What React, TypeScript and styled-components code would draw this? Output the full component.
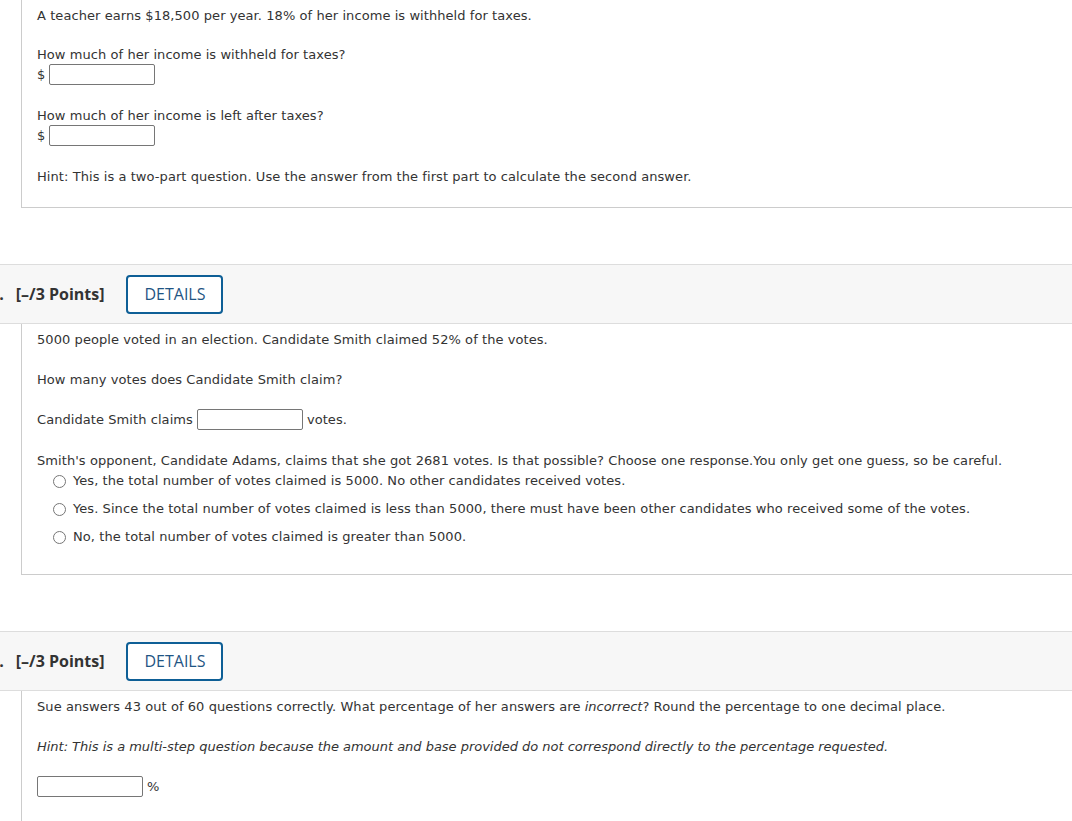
import React from 'react';
import styled, { createGlobalStyle } from 'styled-components';

const GlobalStyle = createGlobalStyle`
  html, body {
    margin: 0;
    padding: 0;
    background: #ffffff;
    overflow: hidden;
  }
  body {
    font-family: "DejaVu Sans", Verdana, sans-serif;
    font-size: 13px;
    letter-spacing: 0.07px;
    color: #333333;
  }
`;

const Page = styled.div`
  width: 1072px;
  display: flex;
  flex-direction: column;
`;

const Panel = styled.div<{ $bottom: number }>`
  margin-left: 21px;
  border-left: 1px solid #cccccc;
  border-bottom: 1px solid #cccccc;
  padding: 7px 0 ${p => p.$bottom}px 15px;
  display: flex;
  flex-direction: column;
`;

// text sits 1px lower than the box it occupies, like the original font
const Line = styled.p<{ $gap?: number }>`
  margin: ${p => p.$gap ?? 0}px 0 -1px 0;
  padding-top: 1px;
  line-height: 16px;
  white-space: nowrap;
`;

const Italic = styled.em`
  letter-spacing: -0.02px;
`;

const InputRow = styled.div<{ $gap?: number }>`
  display: flex;
  align-items: center;
  gap: 4px;
  margin-top: ${p => p.$gap ?? 2}px;
  height: 21px;
  line-height: 16px;
`;

const Answer = styled.input.attrs({ type: 'text' })`
  box-sizing: border-box;
  width: 106px;
  height: 21px;
  margin: 0;
  padding: 0 4px;
  border: 1px solid #767676;
  border-radius: 2px;
  background: #ffffff;
  font: inherit;
`;

const Header = styled.div`
  margin-top: 56px;
  height: 58px;
  display: flex;
  align-items: center;
  background: #f7f7f7;
  border-top: 1px solid #dddddd;
  border-bottom: 1px solid #dddddd;
  font-family: "Open Sans", "DejaVu Sans", sans-serif;
  font-size: 16px;
  letter-spacing: 0;
  color: #333333;
`;

const Num = styled.span`
  font-weight: 700;
  margin-left: -10px;
  margin-right: 12px;
`;

const Points = styled.span`
  font-weight: 700;
`;

const DetailsButton = styled.button`
  box-sizing: border-box;
  margin-left: 22px;
  width: 97px;
  height: 39px;
  border: 2px solid #0e5f96;
  border-radius: 4px;
  background: #ffffff;
  color: #1f5584;
  font-family: "Open Sans", "DejaVu Sans", sans-serif;
  font-size: 16px;
  padding: 0;
  cursor: pointer;
`;

const Choices = styled.div`
  display: flex;
  flex-direction: column;
  gap: 12px;
  margin-top: 5px;
  padding-left: 16px;
`;

const Choice = styled.label`
  display: flex;
  align-items: center;
  gap: 7px;
  height: 16px;
  line-height: 16px;
  white-space: nowrap;
  cursor: pointer;
`;

const Radio = styled.input.attrs({ type: 'radio' })`
  margin: 0;
  width: 13px;
  height: 13px;
`;

const App: React.FC = () => {
  return (
    <>
      <GlobalStyle />
      <Page>
        <Panel $bottom={23}>
          <Line>A teacher earns $18,500 per year. 18% of her income is withheld for taxes.</Line>
          <Line $gap={23}>How much of her income is withheld for taxes?</Line>
          <InputRow>
            <span>$</span>
            <Answer />
          </InputRow>
          <Line $gap={22}>How much of her income is left after taxes?</Line>
          <InputRow>
            <span>$</span>
            <Answer />
          </InputRow>
          <Line $gap={22}>
            Hint: This is a two-part question. Use the answer from the first part to calculate the second answer.
          </Line>
        </Panel>

        <Header>
          <Num>5.</Num>
          <Points>[–/3 Points]</Points>
          <DetailsButton>DETAILS</DetailsButton>
        </Header>
        <Panel $bottom={29}>
          <Line>5000 people voted in an election. Candidate Smith claimed 52% of the votes.</Line>
          <Line $gap={24}>How many votes does Candidate Smith claim?</Line>
          <InputRow $gap={22}>
            <span>Candidate Smith claims</span>
            <Answer />
            <span>votes.</span>
          </InputRow>
          <Line $gap={22}>
            Smith's opponent, Candidate Adams, claims that she got 2681 votes. Is that possible? Choose one response.You only get one guess, so be careful.
          </Line>
          <Choices>
            <Choice>
              <Radio name="adams" />
              Yes, the total number of votes claimed is 5000. No other candidates received votes.
            </Choice>
            <Choice>
              <Radio name="adams" />
              Yes. Since the total number of votes claimed is less than 5000, there must have been other candidates who received some of the votes.
            </Choice>
            <Choice>
              <Radio name="adams" />
              No, the total number of votes claimed is greater than 5000.
            </Choice>
          </Choices>
        </Panel>

        <Header>
          <Num>6.</Num>
          <Points>[–/3 Points]</Points>
          <DetailsButton>DETAILS</DetailsButton>
        </Header>
        <Panel $bottom={30}>
          <Line>
            Sue answers 43 out of 60 questions correctly. What percentage of her answers are <Italic>incorrect</Italic>? Round the percentage to one decimal place.
          </Line>
          <Line $gap={24}>
            <Italic>
              Hint: This is a multi-step question because the amount and base provided do not correspond directly to the percentage requested.
            </Italic>
          </Line>
          <InputRow $gap={22}>
            <Answer />
            <span>%</span>
          </InputRow>
        </Panel>
      </Page>
    </>
  );
};

export default App;
